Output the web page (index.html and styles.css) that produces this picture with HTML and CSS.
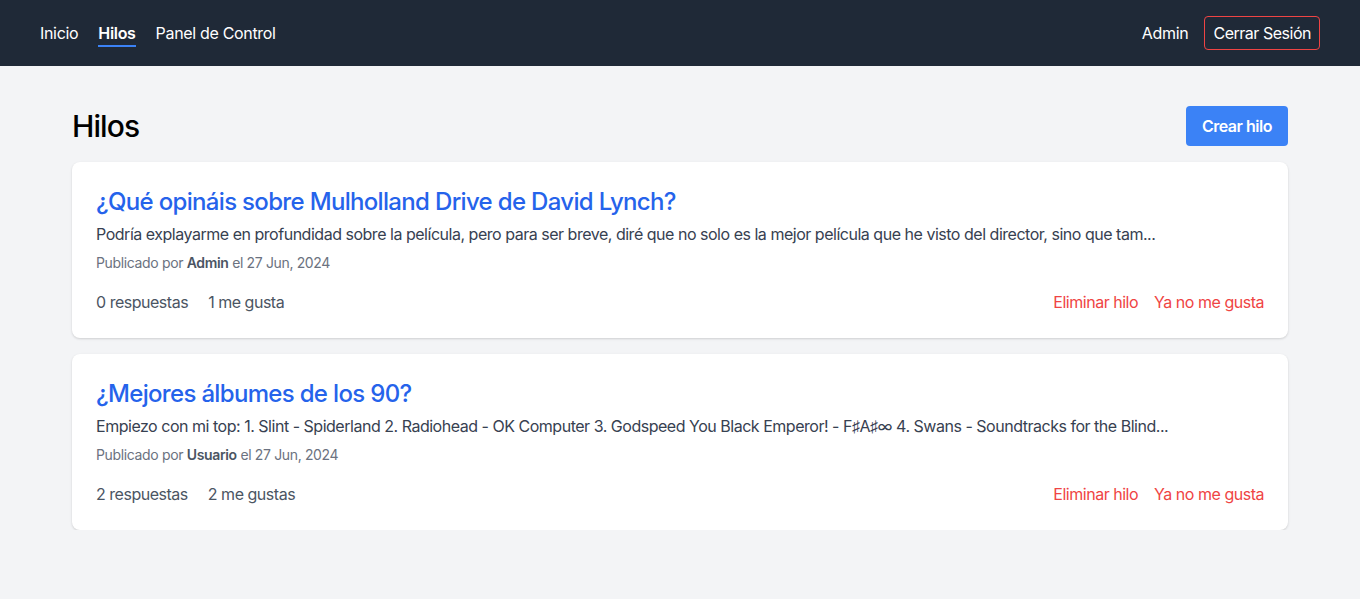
FILE: index.html
```html
<!DOCTYPE html>
<html lang="es">
<head>
<meta charset="utf-8">
<title>Hilos</title>
<link rel="stylesheet" href="styles.css">
</head>
<body>
<nav class="navbar">
  <div class="nav-left">
    <a class="nav-link" href="#">Inicio</a>
    <a class="nav-link active" href="#">Hilos</a>
    <a class="nav-link" href="#">Panel de Control</a>
  </div>
  <div class="nav-right">
    <span class="nav-user">Admin</span>
    <button class="logout">Cerrar Sesión</button>
  </div>
</nav>
<main class="container">
  <div class="page-head">
    <h1>Hilos</h1>
    <button class="btn-primary">Crear hilo</button>
  </div>
  <div class="threads">
    <article class="card">
      <h2 class="thread-title"><a href="#">¿Qué opináis sobre Mulholland Drive de David Lynch?</a></h2>
      <p class="excerpt">Podría explayarme en profundidad sobre la película, pero para ser breve, diré que no solo es la mejor película que he visto del director, sino que tam...</p>
      <p class="meta">Publicado por <strong>Admin</strong> el 27 Jun, 2024</p>
      <div class="card-foot">
        <div class="stats"><span>0 respuestas</span><span>1 me gusta</span></div>
        <div class="actions"><a href="#">Eliminar hilo</a><a href="#">Ya no me gusta</a></div>
      </div>
    </article>
    <article class="card">
      <h2 class="thread-title"><a href="#">¿Mejores álbumes de los 90?</a></h2>
      <p class="excerpt">Empiezo con mi top: 1. Slint - Spiderland 2. Radiohead - OK Computer 3. Godspeed You Black Emperor! - F♯A♯∞ 4. Swans - Soundtracks for the Blind...</p>
      <p class="meta">Publicado por <strong>Usuario</strong> el 27 Jun, 2024</p>
      <div class="card-foot">
        <div class="stats"><span>2 respuestas</span><span>2 me gustas</span></div>
        <div class="actions"><a href="#">Eliminar hilo</a><a href="#">Ya no me gusta</a></div>
      </div>
    </article>
  </div>
</main>
</body>
</html>
```
FILE: styles.css
```css
* { box-sizing: border-box; }
html, body { margin: 0; padding: 0; }
body {
  background: #f3f4f6;
  font-family: Inter, "Noto Sans", sans-serif;
  color: #111827;
  letter-spacing: -0.02em;
}
a { text-decoration: none; }
.navbar {
  height: 66px;
  background: #1f2937;
  display: flex;
  align-items: center;
  justify-content: space-between;
  padding: 0 40px;
}
.nav-left { display: flex; gap: 20px; align-items: center; }
.nav-link {
  color: #fff;
  font-size: 16px;
  line-height: 24px;
  padding-top: 2px;
  border-bottom: 2px solid transparent;
}
.nav-link.active { font-weight: 600; border-bottom-color: #3b82f6; }
.nav-right { display: flex; align-items: center; gap: 16px; }
.nav-user { color: #fff; font-size: 16px; }
.logout {
  background: transparent;
  color: #fff;
  font-family: inherit;
  letter-spacing: -0.03em;
  font-size: 16px;
  border: 1px solid #ef4444;
  border-radius: 4px;
  height: 34px;
  padding: 0 8px;
}
.container {
  max-width: 1216px;
  margin: 0 auto;
  padding-top: 40px;
}
.page-head {
  display: flex;
  justify-content: space-between;
  align-items: center;
  margin-bottom: 16px;
}
h1 { margin: 0; font-size: 30px; font-weight: 500; line-height: 40px; color: #000; letter-spacing: -0.03em; }
.btn-primary {
  background: #3b82f6;
  color: #fff;
  border: 0;
  border-radius: 4px;
  font-family: inherit;
  letter-spacing: -0.03em;
  font-size: 16px;
  font-weight: 600;
  height: 40px;
  padding: 0 16px;
}
.threads { display: flex; flex-direction: column; gap: 16px; }
.card {
  background: #fff;
  border-radius: 8px;
  box-shadow: 0 1px 3px rgba(0,0,0,0.1), 0 1px 2px rgba(0,0,0,0.06);
  padding: 24px;
}
.thread-title { margin: 0; font-size: 24px; line-height: 32px; font-weight: 500; letter-spacing: -0.028em; }
.thread-title a { color: #2563eb; }
.excerpt { margin: 4px 0 0; font-size: 16px; line-height: 24px; color: #374151; letter-spacing: -0.03em; }
.meta { margin: 7px 0 0; font-size: 14px; line-height: 20px; color: #6b7280; letter-spacing: -0.025em; }
.meta strong { font-weight: 600; color: #4b5563; }
.card-foot {
  margin-top: 17px;
  display: flex;
  justify-content: space-between;
  align-items: center;
  font-size: 16px;
  line-height: 24px;
  letter-spacing: -0.03em;
}
.stats { display: flex; gap: 20px; color: #4b5563; }
.actions { display: flex; gap: 16px; }
.actions a { color: #ef4444; }
```
